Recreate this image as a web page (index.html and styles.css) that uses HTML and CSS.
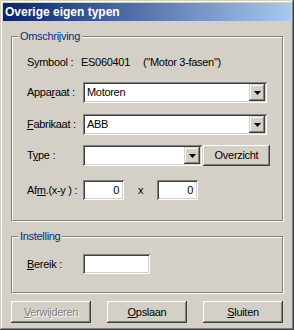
FILE: index.html
```html
<!DOCTYPE html>
<html>
<head>
<meta charset="utf-8">
<link rel="stylesheet" href="styles.css">
</head>
<body>
<div class="window">
  <div class="titlebar"><span class="title">Overige eigen typen</span></div>
  <div class="content">
    <div class="group group-main">
      <div class="legend">Omschrijving</div>
      <div class="row row-symbol">
        <span class="label label-symbol">Symbool :</span>
        <span class="sym-code">ES060401</span>
        <span class="sym-name">("Motor 3-fasen")</span>
      </div>
      <div class="row row-apparaat">
        <span class="label">Appa<u>r</u>aat :</span>
        <div class="combo combo-wide">
          <span class="combo-text">Motoren</span>
          <span class="drop"><svg width="7" height="4" viewBox="0 0 7 4"><path d="M0 0h7L3.5 4z" fill="#000"/></svg></span>
        </div>
      </div>
      <div class="row row-fabrikaat">
        <span class="label"><u>F</u>abrikaat :</span>
        <div class="combo combo-wide">
          <span class="combo-text">ABB</span>
          <span class="drop"><svg width="7" height="4" viewBox="0 0 7 4"><path d="M0 0h7L3.5 4z" fill="#000"/></svg></span>
        </div>
      </div>
      <div class="row row-type">
        <span class="label">T<u>y</u>pe :</span>
        <div class="combo combo-type">
          <span class="combo-text"></span>
          <span class="drop"><svg width="7" height="4" viewBox="0 0 7 4"><path d="M0 0h7L3.5 4z" fill="#000"/></svg></span>
        </div>
        <div class="button btn-overzicht">Overzicht</div>
      </div>
      <div class="row row-afm">
        <span class="label">Af<u>m</u>.(x-y ) :</span>
        <div class="input input-num">0</div>
        <span class="times">x</span>
        <div class="input input-num">0</div>
      </div>
    </div>
    <div class="group group-setting">
      <div class="legend">Instelling</div>
      <div class="row row-bereik">
        <span class="label"><u>B</u>ereik :</span>
        <div class="input input-bereik"></div>
      </div>
    </div>
    <div class="buttons">
      <div class="button btn-main disabled"><span class="btn-label"><u>V</u>erwijderen</span></div>
      <div class="button btn-main"><span class="btn-label"><u>O</u>pslaan</span></div>
      <div class="button btn-main"><span class="btn-label"><u>S</u>luiten</span></div>
    </div>
  </div>
</div>
</body>
</html>
```

FILE: styles.css
```css
html, body {
  margin: 0;
  padding: 0;
  background: #D4D0C8;
}

body {
  font-family: "Liberation Sans", Arial, sans-serif;
  font-size: 11px;
  letter-spacing: -0.3px;
  color: #000;
}

u {
  text-decoration: underline;
  text-underline-offset: 1px;
}

.window {
  width: 294px;
  height: 330px;
  box-sizing: border-box;
  padding: 3px;
  background: #D4D0C8;
  box-shadow: inset -1px -1px #404040, inset 1px 1px #D4D0C8, inset -2px -2px #808080, inset 2px 2px #fff;
}

.titlebar {
  height: 18px;
  background: linear-gradient(to right, #0A246A, #A6CAF0);
  display: flex;
  align-items: center;
}

.title {
  padding-left: 2px;
  color: #fff;
  font-weight: bold;
  font-size: 12px;
  letter-spacing: 0;
  line-height: 18px;
}

.content {
  padding: 15px 8px 0 8px;
}

.group {
  border: 1px solid #808080;
  box-shadow: inset 1px 1px #fff, 1px 1px #fff;
}

.group-main {
  padding-bottom: 20px;
}

.group-setting {
  margin-top: 15px;
  padding-bottom: 18px;
}

.legend {
  width: max-content;
  margin: -7px 0 0 6px;
  padding: 0 2px;
  height: 13px;
  line-height: 13px;
  background: #D4D0C8;
  color: #0E2C78;
}

.row {
  display: flex;
  align-items: center;
  padding-left: 15px;
}

.label {
  width: 56px;
  flex: none;
  line-height: 13px;
  white-space: nowrap;
}

.row-symbol { margin-top: 9px; height: 20px; }
.row-apparaat { margin-top: 10px; height: 21px; }
.row-fabrikaat { margin-top: 11px; height: 21px; }
.row-type { margin-top: 10px; height: 21px; }
.row-afm { margin-top: 14px; height: 20px; }
.row-bereik { margin-top: 11px; height: 20px; }

.label-symbol { width: 54px; }
.sym-code { width: 62px; flex: none; }
.sym-name { white-space: nowrap; }

.combo {
  height: 21px;
  box-sizing: border-box;
  padding: 2px;
  background: #fff;
  display: flex;
  box-shadow: inset 1px 1px #808080, inset -1px -1px #fff, inset 2px 2px #404040, inset -2px -2px #D4D0C8;
}

.combo-wide { width: 184px; }
.combo-type { width: 119px; }

.combo-text {
  flex: 1;
  padding-left: 2px;
  line-height: 17px;
}

.drop {
  width: 16px;
  height: 17px;
  flex: none;
  background: #D4D0C8;
  display: flex;
  align-items: center;
  justify-content: center;
  box-shadow: inset -1px -1px #404040, inset 1px 1px #D4D0C8, inset -2px -2px #808080, inset 2px 2px #fff;
}

.drop svg { display: block; margin-top: 1px; }

.button {
  box-sizing: border-box;
  background: #D4D0C8;
  display: flex;
  align-items: center;
  justify-content: center;
  box-shadow: inset -1px -1px #404040, inset 1px 1px #fff, inset -2px -2px #808080, inset 2px 2px #D4D0C8;
  line-height: 13px;
}

.btn-overzicht {
  width: 67px;
  height: 21px;
  margin-left: 1px;
}

.input {
  height: 20px;
  box-sizing: border-box;
  background: #fff;
  box-shadow: inset 1px 1px #808080, inset -1px -1px #fff, inset 2px 2px #404040, inset -2px -2px #D4D0C8;
  line-height: 20px;
}

.input-num {
  width: 41px;
  text-align: right;
  padding-right: 5px;
}

.times {
  width: 33px;
  text-align: center;
}

.input-bereik { width: 67px; }

.buttons {
  display: flex;
  gap: 16px;
  margin-top: 8px;
}

.btn-main {
  width: 80px;
  height: 22px;
}

.disabled .btn-label {
  color: #808080;
  text-shadow: 1px 1px #fff;
}
```
